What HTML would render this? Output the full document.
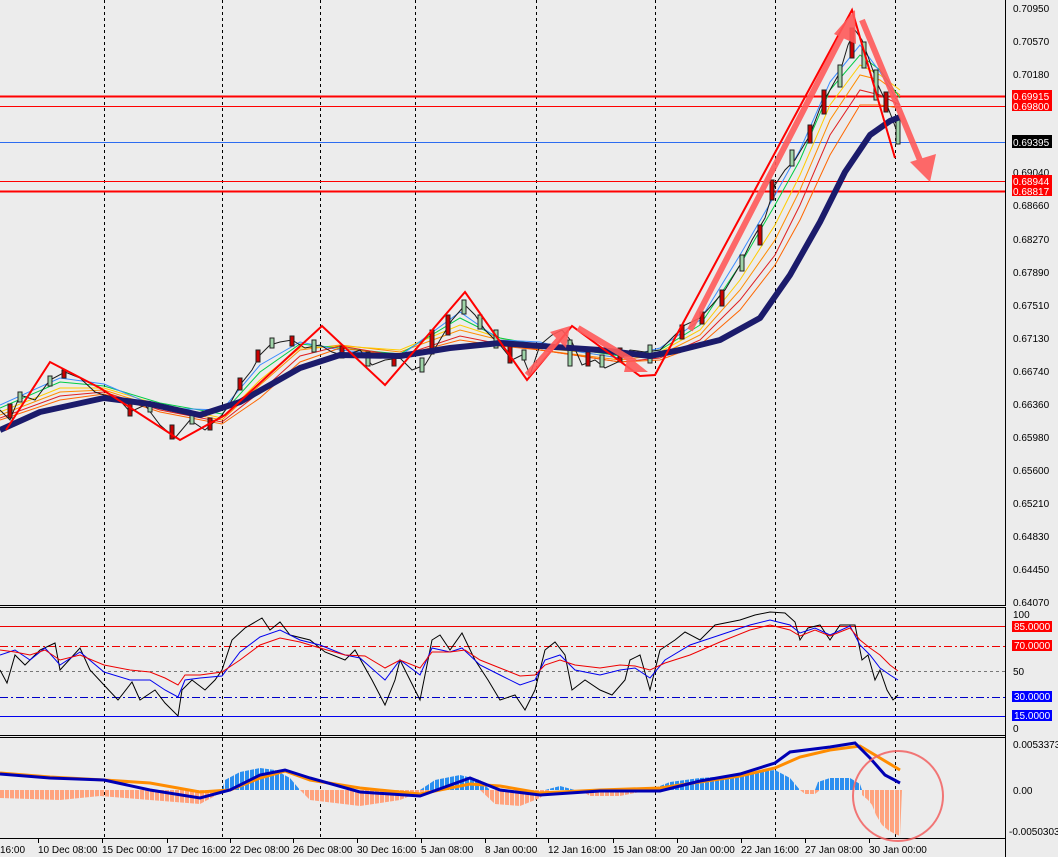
<!DOCTYPE html>
<html><head><meta charset="utf-8"><style>
html,body{margin:0;padding:0;background:#ececec;}
svg{display:block;font-family:"Liberation Sans",sans-serif;}
</style></head><body>
<svg width="1058" height="857" viewBox="0 0 1058 857" xmlns="http://www.w3.org/2000/svg">
<defs>
<pattern id="pb" width="5" height="10" patternUnits="userSpaceOnUse"><rect x="0" y="0" width="4" height="10" fill="#2b8ff0"/></pattern>
<pattern id="ps" width="5" height="10" patternUnits="userSpaceOnUse"><rect x="0" y="0" width="4" height="10" fill="#ffa37e"/></pattern>
</defs>
<rect width="1058" height="857" fill="#ececec"/>
<g stroke="#000" stroke-width="1" stroke-dasharray="3,3">
<line x1="104.5" y1="0" x2="104.5" y2="838"/><line x1="222.5" y1="0" x2="222.5" y2="838"/>
<line x1="320.5" y1="0" x2="320.5" y2="838"/><line x1="415.5" y1="0" x2="415.5" y2="838"/>
<line x1="536.5" y1="0" x2="536.5" y2="838"/><line x1="655.5" y1="0" x2="655.5" y2="838"/>
<line x1="775.5" y1="0" x2="775.5" y2="838"/><line x1="895.5" y1="0" x2="895.5" y2="838"/>
</g>
<line x1="0" y1="96.5" x2="1005" y2="96.5" stroke="#f00" stroke-width="2"/>
<line x1="0" y1="106.5" x2="1005" y2="106.5" stroke="#f00" stroke-width="1"/>
<line x1="0" y1="142.5" x2="1005" y2="142.5" stroke="#2c6cf0" stroke-width="1"/>
<line x1="0" y1="181.5" x2="1005" y2="181.5" stroke="#f00" stroke-width="1"/>
<line x1="0" y1="191.5" x2="1005" y2="191.5" stroke="#f00" stroke-width="2"/>
<g fill="none" stroke-width="1">
<polyline stroke="#ff8c00" points="0,415 60,392 104,390 160,408 222,420 260,385 300,350 340,345 400,352 460,330 500,340 540,350 580,355 620,360 660,355 700,335 740,290 775,240 800,190 830,120 860,75 880,80 900,95"/>
<polyline stroke="#ffcc00" points="0,412 60,388 104,388 160,405 222,418 260,380 300,348 340,346 400,350 460,325 500,338 540,348 580,352 620,358 660,352 700,330 740,280 775,225 800,175 830,105 860,65 880,75 900,90"/>
<polyline stroke="#00cc44" points="0,408 60,382 104,386 160,403 222,414 260,372 300,344 340,348 400,354 460,318 500,338 540,345 580,350 620,356 660,350 700,325 740,265 775,205 800,160 830,90 860,55 880,70 900,98"/>
<polyline stroke="#3a8cff" points="0,405 60,378 104,384 160,408 222,410 260,365 300,342 340,350 400,356 460,312 500,340 540,342 580,352 620,358 660,348 700,320 740,255 775,195 800,150 830,82 860,45 880,72 900,105"/>
<polyline stroke="#e02020" points="0,418 60,396 104,392 160,410 222,422 260,392 300,356 340,346 400,356 460,336 500,344 540,350 580,356 620,362 660,358 700,340 740,300 775,255 800,205 830,135 860,90 880,95 900,105"/>
<polyline stroke="#ff6600" points="0,420 60,400 104,394 160,412 222,424 260,398 300,362 340,348 400,356 460,340 500,346 540,350 580,356 620,362 660,360 700,345 740,310 775,265 800,220 830,155 860,105 880,105 900,108"/>
</g>
<polyline fill="none" stroke="#1a1a1a" stroke-width="1" points="0,410 10,420 20,395 35,400 50,380 65,372 80,378 95,392 104,395 118,398 130,412 145,405 160,425 175,438 190,420 205,430 222,415 232,400 240,385 252,370 260,355 270,345 280,342 292,340 305,348 320,345 332,352 345,356 360,350 372,365 385,360 400,358 412,370 425,365 440,340 452,320 465,305 475,315 485,330 500,345 512,360 522,355 530,375 540,345 552,335 562,330 572,342 582,365 595,360 605,368 618,362 630,350 645,352 660,350 672,338 685,325 700,318 712,305 725,290 740,265 752,240 765,218 775,185 785,170 795,160 810,135 820,108 830,90 840,72 848,45 855,30 862,40 870,62 878,85 885,100 892,118 900,140"/>
<!-- candles -->
<g stroke="#222" stroke-width="1">
<rect x="8" y="404" width="4" height="14" fill="#c00"/><rect x="18" y="392" width="4" height="10" fill="#9fd4a8"/><rect x="48" y="376" width="4" height="10" fill="#9fd4a8"/><rect x="62" y="370" width="4" height="8" fill="#c00"/>
<rect x="128" y="402" width="4" height="14" fill="#c00"/><rect x="148" y="402" width="4" height="10" fill="#9fd4a8"/><rect x="170" y="425" width="4" height="14" fill="#c00"/><rect x="190" y="414" width="4" height="10" fill="#9fd4a8"/><rect x="208" y="418" width="4" height="12" fill="#c00"/>
<rect x="238" y="378" width="4" height="12" fill="#c00"/><rect x="256" y="350" width="4" height="12" fill="#c00"/><rect x="270" y="338" width="4" height="10" fill="#9fd4a8"/><rect x="290" y="336" width="4" height="10" fill="#c00"/><rect x="312" y="340" width="4" height="12" fill="#9fd4a8"/>
<rect x="340" y="346" width="4" height="12" fill="#c00"/><rect x="366" y="352" width="4" height="14" fill="#9fd4a8"/><rect x="392" y="354" width="4" height="12" fill="#c00"/><rect x="420" y="358" width="4" height="14" fill="#9fd4a8"/>
<rect x="430" y="330" width="4" height="24" fill="#c00"/><rect x="446" y="315" width="4" height="20" fill="#c00"/><rect x="462" y="300" width="4" height="14" fill="#9fd4a8"/><rect x="478" y="315" width="4" height="14" fill="#9fd4a8"/><rect x="494" y="330" width="4" height="18" fill="#9fd4a8"/>
<rect x="508" y="345" width="4" height="18" fill="#c00"/><rect x="522" y="350" width="4" height="10" fill="#9fd4a8"/><rect x="568" y="340" width="4" height="26" fill="#9fd4a8"/><rect x="586" y="352" width="4" height="14" fill="#c00"/><rect x="600" y="355" width="4" height="12" fill="#9fd4a8"/><rect x="618" y="348" width="4" height="14" fill="#c00"/>
<rect x="648" y="345" width="4" height="18" fill="#9fd4a8"/><rect x="680" y="325" width="4" height="14" fill="#c00"/><rect x="700" y="312" width="4" height="12" fill="#c00"/><rect x="720" y="290" width="4" height="16" fill="#c00"/><rect x="740" y="255" width="4" height="16" fill="#9fd4a8"/>
<rect x="758" y="225" width="4" height="20" fill="#c00"/><rect x="770" y="180" width="4" height="20" fill="#c00"/><rect x="790" y="150" width="4" height="16" fill="#9fd4a8"/><rect x="808" y="125" width="4" height="18" fill="#c00"/><rect x="822" y="90" width="4" height="24" fill="#c00"/>
<rect x="838" y="65" width="4" height="22" fill="#9fd4a8"/><rect x="850" y="28" width="4" height="30" fill="#c00"/><rect x="862" y="42" width="4" height="26" fill="#9fd4a8"/><rect x="874" y="70" width="4" height="30" fill="#9fd4a8"/><rect x="884" y="92" width="4" height="20" fill="#c00"/><rect x="896" y="118" width="4" height="26" fill="#9fd4a8"/>
</g>
<polyline fill="none" stroke="#1b1b6b" stroke-width="6" stroke-linejoin="round" points="0,430 40,412 104,398 150,404 200,415 240,402 300,368 340,355 400,356 450,348 500,343 540,346 600,350 650,356 680,350 720,340 760,318 790,275 820,222 845,172 870,135 890,121 900,117"/>
<polyline fill="none" stroke="#f00" stroke-width="2" points="6,430 50,362 100,388 180,440 225,415 322,326 385,385 465,292 527,380 572,326 640,376 655,375 852,10 895,158"/>
<g stroke="#ff5a5a" stroke-width="6" fill="#ff5a5a" opacity="0.9">
<line x1="690" y1="330" x2="848" y2="24"/>
<polygon points="855,10 834,34 856,44" stroke="none"/>
<line x1="862" y1="20" x2="922" y2="165"/>
<polygon points="930,182 910,162 936,154" stroke="none"/>
<line x1="527" y1="375" x2="562" y2="336"/>
<polygon points="570,326 550,332 566,348" stroke="none"/>
<line x1="578" y1="328" x2="635" y2="362"/>
<polygon points="648,372 628,356 624,372" stroke="none"/>
</g>
<line x1="1005.5" y1="0" x2="1005.5" y2="857" stroke="#000"/>
<g font-size="10" fill="#000">
<text x="1013" y="12">0.70950</text><text x="1013" y="45">0.70570</text><text x="1013" y="78">0.70180</text>
<text x="1013" y="176">0.69040</text><text x="1013" y="209">0.68660</text><text x="1013" y="243">0.68270</text>
<text x="1013" y="276">0.67890</text><text x="1013" y="309">0.67510</text><text x="1013" y="342">0.67130</text>
<text x="1013" y="375">0.66740</text><text x="1013" y="408">0.66360</text><text x="1013" y="441">0.65980</text>
<text x="1013" y="474">0.65600</text><text x="1013" y="507">0.65210</text><text x="1013" y="540">0.64830</text>
<text x="1013" y="573">0.64450</text><text x="1013" y="606">0.64070</text>
</g>
<rect x="1012" y="90" width="40" height="21" fill="#f00"/>
<rect x="1012" y="135" width="40" height="13" fill="#000"/>
<rect x="1012" y="175" width="40" height="21" fill="#f00"/>
<g font-size="10" fill="#fff">
<text x="1013" y="100">0.69915</text><text x="1013" y="110">0.69800</text>
<text x="1013" y="146">0.69395</text>
<text x="1013" y="185">0.68944</text><text x="1013" y="195">0.68817</text>
</g>
<rect x="0" y="605" width="1006" height="3" fill="#ececec"/>
<line x1="0" y1="605.5" x2="1006" y2="605.5" stroke="#000"/><line x1="0" y1="607.5" x2="1006" y2="607.5" stroke="#000"/>
<line x1="0" y1="735.5" x2="1006" y2="735.5" stroke="#000"/><line x1="0" y1="737.5" x2="1006" y2="737.5" stroke="#000"/>
<line x1="0" y1="838.5" x2="1006" y2="838.5" stroke="#000"/>
<line x1="0" y1="626.5" x2="1005" y2="626.5" stroke="#e00" stroke-width="1"/>
<line x1="0" y1="646.5" x2="1005" y2="646.5" stroke="#e00" stroke-dasharray="8,3,2,3"/>
<line x1="0" y1="671.5" x2="1005" y2="671.5" stroke="#777" stroke-dasharray="3,3"/>
<line x1="0" y1="697.5" x2="1005" y2="697.5" stroke="#0000c8" stroke-dasharray="8,3,2,3"/>
<line x1="0" y1="716.5" x2="1005" y2="716.5" stroke="#0000ee"/>
<polyline fill="none" stroke="#000" points="0,670 7,683 15,655 25,665 40,650 55,643 60,670 80,648 90,670 104,685 118,700 132,682 140,700 155,690 165,703 178,716 182,690 192,680 205,690 215,680 222,670 232,640 245,628 262,618 270,630 280,622 290,635 310,640 325,652 345,660 355,650 372,680 385,705 395,680 400,660 410,680 420,700 432,640 440,635 450,650 462,633 475,660 488,680 500,700 515,695 525,710 535,690 545,650 555,642 565,655 572,690 585,680 600,690 612,695 625,680 630,660 640,655 650,690 660,650 675,640 685,632 700,640 715,625 730,622 740,620 755,615 770,612 785,613 795,622 800,640 808,628 820,625 830,640 840,625 855,625 862,660 868,655 875,680 880,670 887,690 893,700 898,695"/>
<polyline fill="none" stroke="#00e" points="0,655 15,650 30,660 45,648 60,665 80,652 104,672 130,680 150,680 165,690 178,697 185,680 200,678 222,676 240,652 260,637 280,630 300,640 320,645 345,655 360,658 385,680 400,660 420,675 432,648 450,652 462,648 480,665 500,675 520,685 535,680 545,660 560,655 575,670 600,675 620,670 635,668 650,678 665,660 690,645 720,635 750,625 770,620 790,625 800,633 815,628 830,635 850,626 860,645 870,655 880,668 890,675 898,680"/>
<polyline fill="none" stroke="#e00" points="0,650 15,652 30,655 45,650 60,660 80,655 104,665 130,670 150,672 165,678 178,685 185,675 200,675 222,672 240,660 260,645 280,638 300,642 320,648 345,655 365,656 385,668 400,660 420,668 432,652 450,652 465,650 480,660 500,668 520,676 535,675 545,665 560,660 575,665 600,668 620,665 635,666 650,670 665,663 690,655 720,642 750,630 770,625 790,630 800,636 815,630 830,636 850,628 860,640 870,648 880,655 890,665 898,671"/>
<g font-size="10" fill="#000"><text x="1013" y="618">100</text><text x="1013" y="675">50</text><text x="1013" y="732">0</text></g>
<rect x="1012" y="621" width="40" height="11" fill="#f00"/><rect x="1012" y="640" width="40" height="11" fill="#f00"/>
<rect x="1012" y="691" width="40" height="11" fill="#00f"/><rect x="1012" y="710" width="40" height="11" fill="#00f"/>
<g font-size="10" fill="#fff"><text x="1014" y="630">85.0000</text><text x="1014" y="649">70.0000</text><text x="1014" y="700">30.0000</text><text x="1014" y="719">15.0000</text></g>
<polygon fill="url(#ps)" points="0,790 0,798 60,800 100,796 150,800 200,804 215,796 222,790" />
<polygon fill="url(#ps)" points="300,790 310,800 360,806 400,800 420,792 440,790"/>
<polygon fill="url(#ps)" points="480,790 495,804 520,806 540,798 550,790"/>
<polygon fill="url(#ps)" points="580,790 590,796 620,796 640,792 650,790"/>
<polygon fill="url(#ps)" points="800,790 805,794 815,794 820,790"/>
<polygon fill="url(#ps)" points="862,790 862,795 868,800 872,805 876,815 882,825 888,830 895,834 900,836 902,790"/>
<polygon fill="url(#pb)" points="222,790 225,780 240,772 260,768 275,770 290,778 300,790"/>
<polygon fill="url(#pb)" points="420,790 435,780 460,775 480,780 490,790"/>
<polygon fill="url(#pb)" points="545,790 560,786 575,790"/>
<polygon fill="url(#pb)" points="650,790 670,782 700,778 730,776 760,772 775,770 790,778 800,790"/>
<polygon fill="url(#pb)" points="815,790 818,782 830,778 850,778 860,784 862,790"/>
<polyline fill="none" stroke="#ff8c00" stroke-width="3" points="0,773 50,777 104,780 150,783 200,792 230,790 260,778 285,771 310,780 360,788 420,794 470,784 500,786 540,793 600,790 660,788 700,782 740,776 775,768 800,757 830,750 860,746 880,758 900,770"/>
<polyline fill="none" stroke="#0000b4" stroke-width="3" points="0,774 50,778 104,780 150,790 200,798 230,790 260,775 285,770 310,778 360,792 420,796 470,778 500,790 540,795 600,791 660,791 700,781 740,774 775,763 790,752 830,747 855,743 870,758 885,775 900,783"/>
<circle cx="898" cy="796" r="45" fill="none" stroke="#f26060" stroke-width="2" opacity="0.85"/>
<g font-size="10" fill="#000"><text x="1013" y="748">0.0053373</text><text x="1013" y="794">0.00</text><text x="1009" y="835">-0.0050303</text></g>
<g stroke="#000"><line x1="38.5" y1="838" x2="38.5" y2="843"/><line x1="102.5" y1="838" x2="102.5" y2="843"/><line x1="167.5" y1="838" x2="167.5" y2="843"/><line x1="230.5" y1="838" x2="230.5" y2="843"/><line x1="293.5" y1="838" x2="293.5" y2="843"/><line x1="357.5" y1="838" x2="357.5" y2="843"/><line x1="421.5" y1="838" x2="421.5" y2="843"/><line x1="485.5" y1="838" x2="485.5" y2="843"/><line x1="548.5" y1="838" x2="548.5" y2="843"/><line x1="613.5" y1="838" x2="613.5" y2="843"/><line x1="677.5" y1="838" x2="677.5" y2="843"/><line x1="741.5" y1="838" x2="741.5" y2="843"/><line x1="805.5" y1="838" x2="805.5" y2="843"/><line x1="869.5" y1="838" x2="869.5" y2="843"/></g>
<g font-size="10" fill="#000">
<text x="0" y="853">16:00</text><text x="38" y="853">10 Dec 08:00</text><text x="102" y="853">15 Dec 00:00</text>
<text x="167" y="853">17 Dec 16:00</text><text x="230" y="853">22 Dec 08:00</text><text x="293" y="853">26 Dec 08:00</text>
<text x="357" y="853">30 Dec 16:00</text><text x="421" y="853">5 Jan 08:00</text><text x="485" y="853">8 Jan 00:00</text>
<text x="548" y="853">12 Jan 16:00</text><text x="613" y="853">15 Jan 08:00</text><text x="677" y="853">20 Jan 00:00</text>
<text x="741" y="853">22 Jan 16:00</text><text x="805" y="853">27 Jan 08:00</text><text x="869" y="853">30 Jan 00:00</text>
</g>
</svg>
</body></html>
